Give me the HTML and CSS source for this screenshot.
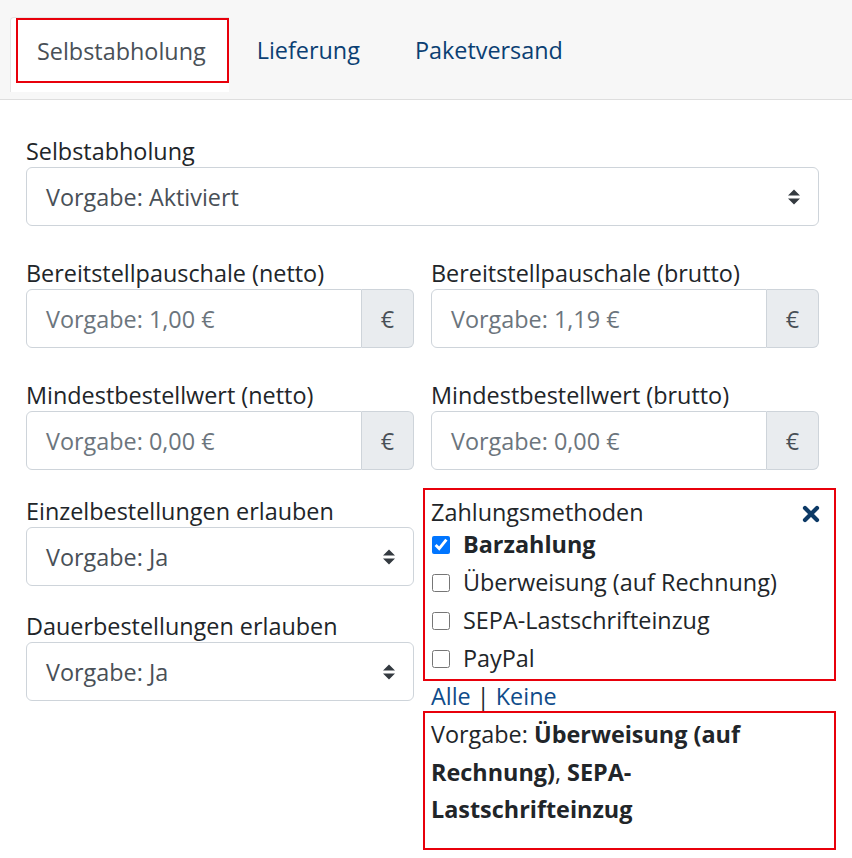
FILE: index.html
```html
<!DOCTYPE html>
<html lang="de">
<head>
<meta charset="utf-8">
<title>Selbstabholung</title>
<link rel="stylesheet" href="styles.css">
</head>
<body>
<nav class="tabs">
  <div class="tab active"><span class="mark">Selbstabholung</span></div>
  <a class="tab" href="#">Lieferung</a>
  <a class="tab" href="#">Paketversand</a>
</nav>

<main class="content">
  <div class="group">
    <label class="label">Selbstabholung</label>
    <div class="select">
      <span>Vorgabe: Aktiviert</span>
      <svg class="arrows" width="14" height="18" viewBox="0 0 14 18"><path d="M7 1.5 L13 7.5 H1 Z M1 10.5 H13 L7 16.5 Z" fill="#343a40"/></svg>
    </div>
  </div>

  <div class="grid">
    <div class="group">
      <label class="label">Bereitstellpauschale (netto)</label>
      <div class="input-group"><div class="input">Vorgabe: 1,00 €</div><div class="addon">€</div></div>
    </div>
    <div class="group">
      <label class="label">Bereitstellpauschale (brutto)</label>
      <div class="input-group"><div class="input">Vorgabe: 1,19 €</div><div class="addon">€</div></div>
    </div>
    <div class="group short">
      <label class="label">Mindestbestellwert (netto)</label>
      <div class="input-group"><div class="input">Vorgabe: 0,00 €</div><div class="addon">€</div></div>
    </div>
    <div class="group short">
      <label class="label">Mindestbestellwert (brutto)</label>
      <div class="input-group"><div class="input">Vorgabe: 0,00 €</div><div class="addon">€</div></div>
    </div>

    <div class="col left">
      <div class="group">
        <label class="label">Einzelbestellungen erlauben</label>
        <div class="select">
          <span>Vorgabe: Ja</span>
          <svg class="arrows" width="14" height="18" viewBox="0 0 14 18"><path d="M7 1.5 L13 7.5 H1 Z M1 10.5 H13 L7 16.5 Z" fill="#343a40"/></svg>
        </div>
      </div>
      <div class="group">
        <label class="label">Dauerbestellungen erlauben</label>
        <div class="select">
          <span>Vorgabe: Ja</span>
          <svg class="arrows" width="14" height="18" viewBox="0 0 14 18"><path d="M7 1.5 L13 7.5 H1 Z M1 10.5 H13 L7 16.5 Z" fill="#343a40"/></svg>
        </div>
      </div>
    </div>

    <div class="col right">
      <div class="redbox methods">
        <div class="methods-head">
          <span>Zahlungsmethoden</span>
          <svg class="close" width="20" height="20" viewBox="0 0 20 20"><path d="M4 4 L16 16 M16 4 L4 16" stroke="#0d3a66" stroke-width="4.2" stroke-linecap="round"/></svg>
        </div>
        <label class="check"><input type="checkbox" checked><b>Barzahlung</b></label>
        <label class="check"><input type="checkbox">Überweisung (auf Rechnung)</label>
        <label class="check"><input type="checkbox">SEPA-Lastschrifteinzug</label>
        <label class="check"><input type="checkbox">PayPal</label>
      </div>
      <div class="links"><a href="#">Alle</a> | <a href="#">Keine</a></div>
      <div class="redbox hint">Vorgabe: <b>Überweisung (auf Rechnung)</b>, <b>SEPA-Lastschrifteinzug</b></div>
    </div>
  </div>
</main>
</body>
</html>
```

FILE: styles.css
```css
* { box-sizing: border-box; }
html, body { margin: 0; padding: 0; }
body {
  font-family: "Open Sans", "Noto Sans", "DejaVu Sans", sans-serif;
  font-size: 23.4px;
  line-height: 1.5;
  color: #212529;
  background: #fff;
  width: 852px;
}
a { color: #0f4c8a; text-decoration: none; }

.tabs {
  display: flex;
  align-items: flex-start;
  background: #f7f7f7;
  height: 100px;
  padding: 17px 0 0 10px;
  border-bottom: 1px solid #dedede;
}
.tab {
  display: flex;
  align-items: center;
  height: 66px;
  padding: 2px 27px 0 28px;
  color: #0b3f73;
}
.tab.active {
  height: 75px;
  padding: 0 0 9px 5px;
  background: #fff;
  border: 1px solid #e6e6e6;
  border-right: 0;
  border-bottom: 0;
  border-radius: 4px 0 0 0;
  color: #495057;
  align-items: stretch;
}
.mark {
  display: flex;
  align-items: center;
  border: 2px solid #e8000b;
  padding: 2px 21px 0 19px;
}

.content {
  padding: 36px 33px 0 26px;
}
.group { margin-bottom: 32px; }
.group.short { margin-bottom: 26px; }
.label {
  display: block;
  line-height: 31px;
}
.select {
  display: flex;
  align-items: center;
  justify-content: space-between;
  height: 59px;
  border: 1px solid #ced4da;
  border-radius: 6px;
  padding: 3px 17px 0 19px;
  color: #495057;
}
.arrows { display: block; margin-top: -2px; }

.grid {
  display: grid;
  grid-template-columns: 1fr 1fr;
  column-gap: 17px;
}
.input-group {
  display: flex;
  height: 59px;
}
.input {
  flex: 1;
  display: flex;
  align-items: center;
  border: 1px solid #ced4da;
  border-radius: 6px 0 0 6px;
  padding: 3px 0 0 19px;
  color: #6c757d;
}
.addon {
  width: 52px;
  display: flex;
  align-items: center;
  justify-content: center;
  background: #e9ecef;
  border: 1px solid #ced4da;
  border-left: 0;
  border-radius: 0 6px 6px 0;
  padding-top: 3px;
  color: #495057;
}

.col { display: flex; flex-direction: column; }
.col.left .group { margin-bottom: 25px; }
.col.right { margin-top: -8px; }
.redbox {
  border: 2px solid #e8000b;
  margin: 0 -17px 0 -8px;
  padding-left: 6px;
}
.methods {
  padding-top: 8px;
  padding-bottom: 1px;
}
.methods-head {
  display: flex;
  justify-content: space-between;
  align-items: center;
  height: 28px;
  line-height: 28px;
  padding-right: 13px;
}
.close { display: block; margin-top: 4px; }
.check {
  display: flex;
  align-items: center;
  height: 38px;
}
.check input {
  width: 18px;
  height: 18px;
  margin: 0 13px 0 1px;
  accent-color: #0075ff;
}
.check b { font-weight: 700; }
.links { line-height: 30px; height: 30px; }
.hint {
  line-height: 37.5px;
  padding-top: 3px;
  padding-bottom: 19px;
  padding-right: 8px;
}
.hint b { font-weight: 700; }
```
